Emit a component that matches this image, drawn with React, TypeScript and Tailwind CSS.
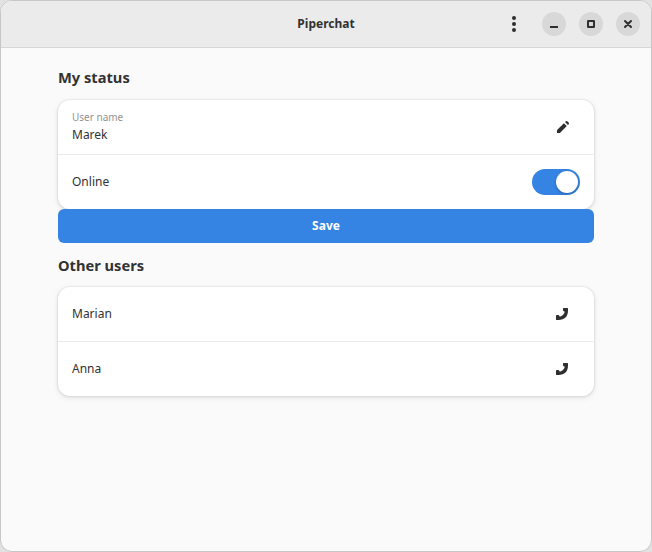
import type { ReactNode } from "react";

function WindowButton({ label, children }: { label: string; children: ReactNode }) {
  return (
    <button aria-label={label} className="flex size-6 items-center justify-center rounded-full bg-[#d8d8d8]">
      <svg className="size-4" viewBox="0 0 16 16" fill="none" stroke="#2f2f2f" strokeWidth="2">
        {children}
      </svg>
    </button>
  );
}

function HeaderBar() {
  return (
    <header className="grid h-[47px] shrink-0 grid-cols-[1fr_auto_1fr] items-center border-b border-[#d6d6d6] bg-[#ebebeb] px-[11px]">
      <span />
      <h1 className="text-[12px] leading-4 font-bold">Piperchat</h1>
      <div className="flex items-center justify-end gap-[13px]">
        <button aria-label="Menu" className="mr-[7px] flex h-6 w-4 items-center justify-center">
          <svg className="h-4 w-4" viewBox="0 0 16 16" fill="#2f2f2f">
            <circle cx="8" cy="2" r="2" />
            <circle cx="8" cy="8" r="2" />
            <circle cx="8" cy="14" r="2" />
          </svg>
        </button>
        <WindowButton label="Minimize">
          <path d="M4 11h8" />
        </WindowButton>
        <WindowButton label="Maximize">
          <rect x="5" y="5" width="6" height="6" rx="0.3" />
        </WindowButton>
        <WindowButton label="Close">
          <path d="M5 5l6 6M11 5l-6 6" strokeLinecap="round" />
        </WindowButton>
      </div>
    </header>
  );
}

function Card({ children }: { children: ReactNode }) {
  return (
    <div className="h-[109px] divide-y divide-[#ebebeb] rounded-xl bg-white shadow-[0_0_0_1px_rgba(0,0,0,0.03),0_1px_3px_1px_rgba(0,0,0,0.07),0_2px_6px_2px_rgba(0,0,0,0.03)]">
      {children}
    </div>
  );
}

function PencilIcon() {
  return (
    <svg className="size-4" viewBox="0 0 16 16" fill="#2f2f2f">
      <path d="M8.9 4.2 2.3 10.8Q2 11.1 2 11.5V14H4.5Q4.9 14 5.2 13.7L11.8 7.1zM10 3.1l.6-.6c.7-.7 1.4-.7 2 0l.9.9c.7.7.7 1.4 0 2l-.6.6z" />
    </svg>
  );
}

function PhoneIcon() {
  return (
    <svg className="size-4" viewBox="0 0 16 16" fill="#2f2f2f">
      <path d="M9.7 2H13.4Q14 2 14 2.6V4.5C14 10.6 10.6 14 4.5 14H2.6Q2 14 2 13.4V9.7Q2 9 2.7 9H4.3Q5 9 5.3 9.7L5.8 10.8C8.1 10.2 10.2 8.1 10.8 5.8L9.7 5.3Q9 5 9 4.3V2.7Q9 2 9.7 2Z" />
    </svg>
  );
}

function UserRow({ name }: { name: string }) {
  return (
    <div className="flex h-[54.5px] items-center justify-between pr-6 pl-[14px]">
      <span className="text-[12px] leading-4">{name}</span>
      <button aria-label={`Call ${name}`}><PhoneIcon /></button>
    </div>
  );
}

export default function App() {
  return (
    <div className="h-[552px] w-[652px] bg-[#e2e2e2] font-['Noto_Sans',sans-serif] text-[#323232]">
      <div className="flex h-full flex-col overflow-hidden rounded-xl border border-[#c7c7c7] bg-[#fafafa]">
        <HeaderBar />
        <main className="px-[57px] pt-[19px]">
          <h2 className="mb-[13px] text-[14.67px] leading-5 font-bold">My status</h2>
          <Card>
            <div className="flex h-[55px] items-center justify-between pr-[23px] pl-[14px]">
              <div>
                <div className="-mt-px mb-px text-[10px] leading-4 text-[#929292]">User name</div>
                <div className="text-[12px] leading-[18px]">Marek</div>
              </div>
              <button aria-label="Edit user name"><PencilIcon /></button>
            </div>
            <div className="flex h-[54px] items-center justify-between px-[14px]">
              <span className="text-[12px] leading-4">Online</span>
              <button role="switch" aria-checked="true" aria-label="Online" className="flex h-[26px] w-12 items-center justify-end rounded-full bg-[#3584e4] p-[2px]">
                <span className="size-[22px] rounded-full bg-white shadow-[0_1px_3px_rgba(0,0,0,0.3)]" />
              </button>
            </div>
          </Card>
          <button className="relative block h-[34px] w-full rounded-md bg-[#3584e4] text-center text-[12px] leading-4 font-bold text-white">Save</button>
          <h2 className="mt-3 mb-3 text-[14.67px] leading-5 font-bold">Other users</h2>
          <Card>
            <UserRow name="Marian" />
            <UserRow name="Anna" />
          </Card>
        </main>
      </div>
    </div>
  );
}
